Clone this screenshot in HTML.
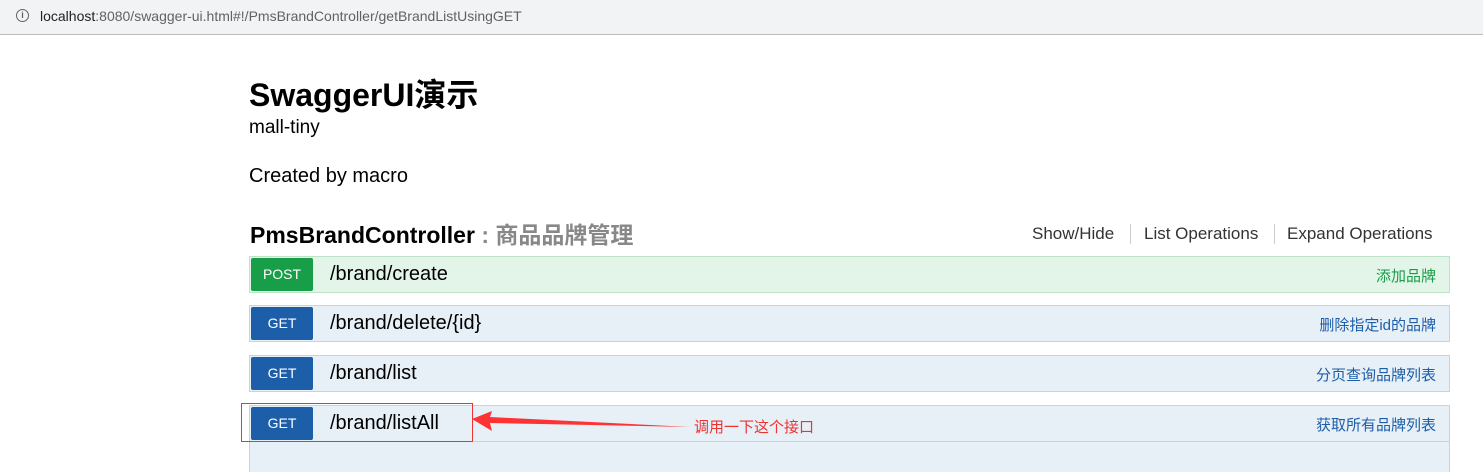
<!DOCTYPE html>
<html style="height:472px;overflow:hidden"><head><meta charset="utf-8"><style>
body{margin:0;width:1483px;height:472px;overflow:hidden;background:#fff;font-family:"Liberation Sans","Noto Sans CJK SC",sans-serif;position:relative}
.bar{position:absolute;left:0;top:0;width:1483px;height:34px;background:#f1f3f4;border-bottom:1px solid #bbb}
.url{position:absolute;left:40px;top:8px;font-size:14px;color:#5f6368}
.url b{font-weight:normal;color:#202124}
.a{position:absolute;white-space:nowrap}
.row{position:absolute;left:249px;width:1199px;height:35px;border:1px solid #c5d3e3;background:#e7eff7}
.row.p{background:#e3f4e8;border-color:#bfe3c8}
.badge{position:absolute;left:1px;top:1px;width:62px;height:33px;background:#1c5ea8;color:#fff;font-size:14px;text-align:center;line-height:33px;border-radius:2px}
.p .badge{background:#189e48}
.path{position:absolute;left:80px;top:6px;font-size:20px;color:#000}
.desc{position:absolute;right:13px;top:8px;font-size:15px;color:#1c5ea8}
.p .desc{color:#189e48}
</style></head><body>
<div class="bar"><span style="position:absolute;left:16px;top:9px;width:11px;height:11px;border:1.5px solid #5f6368;border-radius:50%;font-size:9px;line-height:11px;text-align:center;color:#5f6368;font-weight:bold">i</span><div class="url"><b>localhost</b>:8080/swagger-ui.html#!/PmsBrandController/getBrandListUsingGET</div></div>
<div class="a" style="left:249px;top:70px;font-size:32px;font-weight:bold;color:#000">SwaggerUI演示</div>
<div class="a" style="left:249px;top:117px;font-size:19px">mall-tiny</div>
<div class="a" style="left:249px;top:165px;font-size:20px">Created by macro</div>
<div class="a" style="left:250px;top:216px;font-size:23px;font-weight:bold">PmsBrandController <span style="color:#888">: 商品品牌管理</span></div>
<div class="a" style="left:1032px;top:224px;font-size:17px;color:#333">Show/Hide</div>
<div class="a" style="left:1130px;top:224px;height:20px;border-left:1px solid #ccc"></div>
<div class="a" style="left:1144px;top:224px;font-size:17px;color:#333">List Operations</div>
<div class="a" style="left:1274px;top:224px;height:20px;border-left:1px solid #ccc"></div>
<div class="a" style="left:1287px;top:224px;font-size:17px;color:#333">Expand Operations</div>
<div class="row p" style="top:256px"><div class="badge">POST</div><div class="path">/brand/create</div><div class="desc">添加品牌</div></div>
<div class="row" style="top:305px"><div class="badge">GET</div><div class="path">/brand/delete/{id}</div><div class="desc">删除指定id的品牌</div></div>
<div class="row" style="top:355px"><div class="badge">GET</div><div class="path">/brand/list</div><div class="desc">分页查询品牌列表</div></div>
<div class="row" style="top:405px;height:80px"><div class="badge">GET</div><div class="path">/brand/listAll</div><div class="desc">获取所有品牌列表</div><div style="position:absolute;left:0;top:35px;width:1199px;border-top:1px solid #c5d3e3"></div></div>
<div class="a" style="left:241px;top:403px;width:230px;height:37px;border:1px solid #e33"></div>
<svg class="a" style="left:470px;top:408px" width="225" height="30"><polygon points="2,11 22,3 20,9 220,19 20,15 22,23" fill="#f33"/></svg>
<div class="a" style="left:694px;top:416px;font-size:15px;color:#e33">调用一下这个接口</div>
</body></html>
